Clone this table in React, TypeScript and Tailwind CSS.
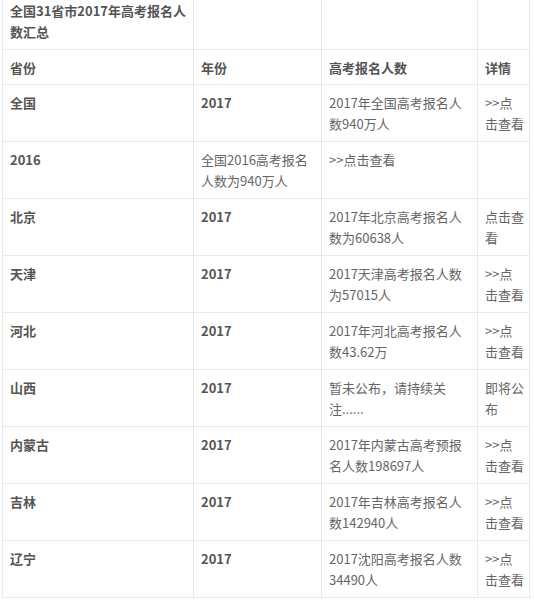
const rows: { a: string; b: string; c: string; d: string; bBold?: boolean }[] = [
  { a: '全国', b: '2017', c: '2017年全国高考报名人数940万人', d: '>>点击查看', bBold: true },
  { a: '2016', b: '全国2016高考报名人数为940万人', c: '>>点击查看', d: '' },
  { a: '北京', b: '2017', c: '2017年北京高考报名人数为60638人', d: '点击查看', bBold: true },
  { a: '天津', b: '2017', c: '2017天津高考报名人数为57015人', d: '>>点击查看', bBold: true },
  { a: '河北', b: '2017', c: '2017年河北高考报名人数43.62万', d: '>>点击查看', bBold: true },
  { a: '山西', b: '2017', c: '暂未公布，请持续关注......', d: '即将公布', bBold: true },
  { a: '内蒙古', b: '2017', c: '2017年内蒙古高考预报名人数198697人', d: '>>点击查看', bBold: true },
  { a: '吉林', b: '2017', c: '2017年吉林高考报名人数142940人', d: '>>点击查看', bBold: true },
  { a: '辽宁', b: '2017', c: '2017沈阳高考报名人数34490人', d: '>>点击查看', bBold: true },
];

const cell = 'border border-[#e8e8e8] align-top pl-[7px] pr-[7px] py-[7px]';
const first = 'border border-[#e8e8e8] align-top pl-[7px] pr-[2px] py-[7px]';
const last = 'border border-[#e8e8e8] align-top pl-[7px] pr-[5px] py-[7px]';

export default function App() {
  return (
    <div className="w-[534px] h-[600px] overflow-hidden bg-white">
      <table
        className="ml-[2px] -mt-[8px] w-[527px] table-fixed border-collapse text-[13px] leading-[21px] text-[#666]"
        style={{ fontFamily: '"Noto Sans CJK SC", "Noto Sans", sans-serif' }}
      >
        <colgroup>
          <col className="w-[191px]" />
          <col className="w-[128px]" />
          <col className="w-[156px]" />
          <col className="w-[52px]" />
        </colgroup>
        <tbody>
          <tr>
            <td className={`${first} font-bold text-[#555]`}>全国31省市2017年高考报名人数汇总</td>
            <td className={cell}></td>
            <td className={cell}></td>
            <td className={last}></td>
          </tr>
          <tr className="font-bold text-[#555]">
            <td className={`${first} pb-[6px]`}>省份</td>
            <td className={`${cell} pb-[6px]`}>年份</td>
            <td className={`${cell} pb-[6px]`}>高考报名人数</td>
            <td className={`${last} pb-[6px]`}>详情</td>
          </tr>
          {rows.map((r) => (
            <tr key={r.a}>
              <td className={`${first} font-bold text-[#555]`}>{r.a}</td>
              <td className={r.bBold ? `${cell} font-bold text-[#555]` : cell}>{r.b}</td>
              <td className={cell}>{r.c}</td>
              <td className={last}>{r.d}</td>
            </tr>
          ))}
        </tbody>
      </table>
    </div>
  );
}
